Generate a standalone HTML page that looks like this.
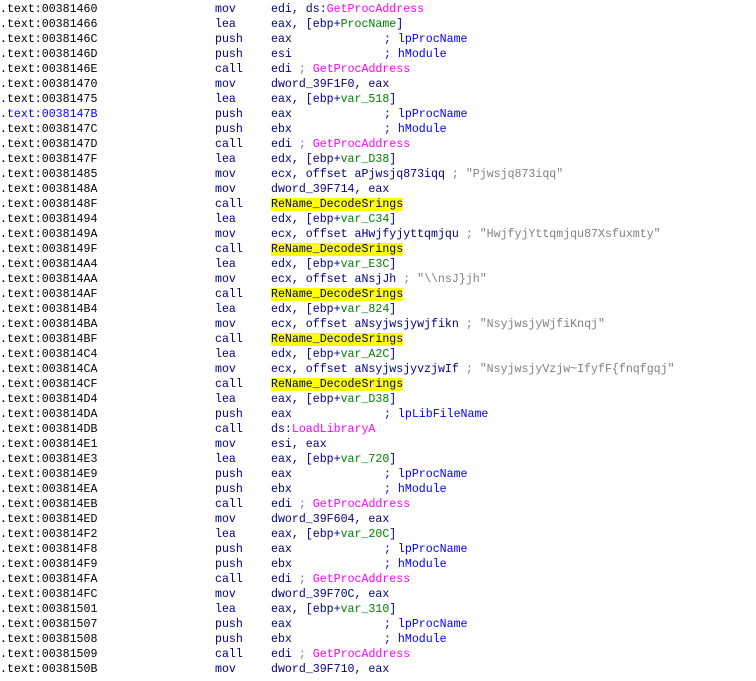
<!DOCTYPE html><html><head><style>
body{margin:0;background:#fff;width:756px;height:681px;overflow:hidden;position:relative;font-family:"Liberation Mono",monospace;font-size:11.6px;color:#000080}
.l{position:absolute;left:0;height:15px;line-height:15px;white-space:pre;width:756px;margin-top:1px}
.a{position:absolute;left:0;color:#000}
.m{position:absolute;left:215px}
.o{position:absolute;left:271px}
.c{position:absolute;left:384px;color:#0000ff}
.g{color:#808080}.n{color:#ff00ff}.v{color:#008000}.h{background:#ffff00}.b{color:#0000ff}
</style></head><body>
<div class="l" style="top:1px"><span class="a">.text:00381460</span><span class="m">mov</span><span class="o">edi, ds:<span class="n">GetProcAddress</span></span></div>
<div class="l" style="top:16px"><span class="a">.text:00381466</span><span class="m">lea</span><span class="o">eax, [ebp+<span class="v">ProcName</span>]</span></div>
<div class="l" style="top:31px"><span class="a">.text:0038146C</span><span class="m">push</span><span class="o">eax</span><span class="c">; lpProcName</span></div>
<div class="l" style="top:46px"><span class="a">.text:0038146D</span><span class="m">push</span><span class="o">esi</span><span class="c">; hModule</span></div>
<div class="l" style="top:61px"><span class="a">.text:0038146E</span><span class="m">call</span><span class="o">edi <span class="g">;</span> <span class="n">GetProcAddress</span></span></div>
<div class="l" style="top:76px"><span class="a">.text:00381470</span><span class="m">mov</span><span class="o">dword_39F1F0, eax</span></div>
<div class="l" style="top:91px"><span class="a">.text:00381475</span><span class="m">lea</span><span class="o">eax, [ebp+<span class="v">var_518</span>]</span></div>
<div class="l" style="top:106px"><span class="a b">.text:0038147B</span><span class="m">push</span><span class="o">eax</span><span class="c">; lpProcName</span></div>
<div class="l" style="top:121px"><span class="a">.text:0038147C</span><span class="m">push</span><span class="o">ebx</span><span class="c">; hModule</span></div>
<div class="l" style="top:136px"><span class="a">.text:0038147D</span><span class="m">call</span><span class="o">edi <span class="g">;</span> <span class="n">GetProcAddress</span></span></div>
<div class="l" style="top:151px"><span class="a">.text:0038147F</span><span class="m">lea</span><span class="o">edx, [ebp+<span class="v">var_D38</span>]</span></div>
<div class="l" style="top:166px"><span class="a">.text:00381485</span><span class="m">mov</span><span class="o">ecx, offset aPjwsjq873iqq <span class="g">; "Pjwsjq873iqq"</span></span></div>
<div class="l" style="top:181px"><span class="a">.text:0038148A</span><span class="m">mov</span><span class="o">dword_39F714, eax</span></div>
<div class="l" style="top:196px"><span class="a">.text:0038148F</span><span class="m">call</span><span class="o"><span class="h">ReName_DecodeSrings</span></span></div>
<div class="l" style="top:211px"><span class="a">.text:00381494</span><span class="m">lea</span><span class="o">edx, [ebp+<span class="v">var_C34</span>]</span></div>
<div class="l" style="top:226px"><span class="a">.text:0038149A</span><span class="m">mov</span><span class="o">ecx, offset aHwjfyjyttqmjqu <span class="g">; "HwjfyjYttqmjqu87Xsfuxmty"</span></span></div>
<div class="l" style="top:241px"><span class="a">.text:0038149F</span><span class="m">call</span><span class="o"><span class="h">ReName_DecodeSrings</span></span></div>
<div class="l" style="top:256px"><span class="a">.text:003814A4</span><span class="m">lea</span><span class="o">edx, [ebp+<span class="v">var_E3C</span>]</span></div>
<div class="l" style="top:271px"><span class="a">.text:003814AA</span><span class="m">mov</span><span class="o">ecx, offset aNsjJh <span class="g">; "\\nsJ}jh"</span></span></div>
<div class="l" style="top:286px"><span class="a">.text:003814AF</span><span class="m">call</span><span class="o"><span class="h">ReName_DecodeSrings</span></span></div>
<div class="l" style="top:301px"><span class="a">.text:003814B4</span><span class="m">lea</span><span class="o">edx, [ebp+<span class="v">var_824</span>]</span></div>
<div class="l" style="top:316px"><span class="a">.text:003814BA</span><span class="m">mov</span><span class="o">ecx, offset aNsyjwsjywjfikn <span class="g">; "NsyjwsjyWjfiKnqj"</span></span></div>
<div class="l" style="top:331px"><span class="a">.text:003814BF</span><span class="m">call</span><span class="o"><span class="h">ReName_DecodeSrings</span></span></div>
<div class="l" style="top:346px"><span class="a">.text:003814C4</span><span class="m">lea</span><span class="o">edx, [ebp+<span class="v">var_A2C</span>]</span></div>
<div class="l" style="top:361px"><span class="a">.text:003814CA</span><span class="m">mov</span><span class="o">ecx, offset aNsyjwsjyvzjwIf <span class="g">; "NsyjwsjyVzjw~IfyfF{fnqfgqj"</span></span></div>
<div class="l" style="top:376px"><span class="a">.text:003814CF</span><span class="m">call</span><span class="o"><span class="h">ReName_DecodeSrings</span></span></div>
<div class="l" style="top:391px"><span class="a">.text:003814D4</span><span class="m">lea</span><span class="o">eax, [ebp+<span class="v">var_D38</span>]</span></div>
<div class="l" style="top:406px"><span class="a">.text:003814DA</span><span class="m">push</span><span class="o">eax</span><span class="c">; lpLibFileName</span></div>
<div class="l" style="top:421px"><span class="a">.text:003814DB</span><span class="m">call</span><span class="o">ds:<span class="n">LoadLibraryA</span></span></div>
<div class="l" style="top:436px"><span class="a">.text:003814E1</span><span class="m">mov</span><span class="o">esi, eax</span></div>
<div class="l" style="top:451px"><span class="a">.text:003814E3</span><span class="m">lea</span><span class="o">eax, [ebp+<span class="v">var_720</span>]</span></div>
<div class="l" style="top:466px"><span class="a">.text:003814E9</span><span class="m">push</span><span class="o">eax</span><span class="c">; lpProcName</span></div>
<div class="l" style="top:481px"><span class="a">.text:003814EA</span><span class="m">push</span><span class="o">ebx</span><span class="c">; hModule</span></div>
<div class="l" style="top:496px"><span class="a">.text:003814EB</span><span class="m">call</span><span class="o">edi <span class="g">;</span> <span class="n">GetProcAddress</span></span></div>
<div class="l" style="top:511px"><span class="a">.text:003814ED</span><span class="m">mov</span><span class="o">dword_39F604, eax</span></div>
<div class="l" style="top:526px"><span class="a">.text:003814F2</span><span class="m">lea</span><span class="o">eax, [ebp+<span class="v">var_20C</span>]</span></div>
<div class="l" style="top:541px"><span class="a">.text:003814F8</span><span class="m">push</span><span class="o">eax</span><span class="c">; lpProcName</span></div>
<div class="l" style="top:556px"><span class="a">.text:003814F9</span><span class="m">push</span><span class="o">ebx</span><span class="c">; hModule</span></div>
<div class="l" style="top:571px"><span class="a">.text:003814FA</span><span class="m">call</span><span class="o">edi <span class="g">;</span> <span class="n">GetProcAddress</span></span></div>
<div class="l" style="top:586px"><span class="a">.text:003814FC</span><span class="m">mov</span><span class="o">dword_39F70C, eax</span></div>
<div class="l" style="top:601px"><span class="a">.text:00381501</span><span class="m">lea</span><span class="o">eax, [ebp+<span class="v">var_310</span>]</span></div>
<div class="l" style="top:616px"><span class="a">.text:00381507</span><span class="m">push</span><span class="o">eax</span><span class="c">; lpProcName</span></div>
<div class="l" style="top:631px"><span class="a">.text:00381508</span><span class="m">push</span><span class="o">ebx</span><span class="c">; hModule</span></div>
<div class="l" style="top:646px"><span class="a">.text:00381509</span><span class="m">call</span><span class="o">edi <span class="g">;</span> <span class="n">GetProcAddress</span></span></div>
<div class="l" style="top:661px"><span class="a">.text:0038150B</span><span class="m">mov</span><span class="o">dword_39F710, eax</span></div>
</body></html>
